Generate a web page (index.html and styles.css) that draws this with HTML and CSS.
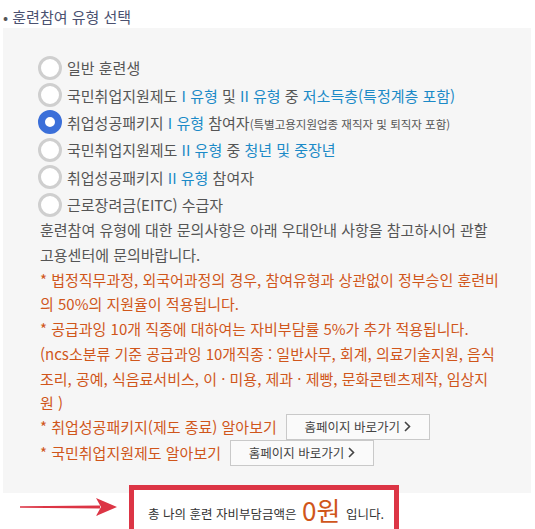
FILE: index.html
```html
<!DOCTYPE html>
<html lang="ko">
<head>
    <meta charset="UTF-8">
    <meta name="viewport" content="width=device-width, initial-scale=1.0">
    <title>훈련참여 유형 선택</title>
    <link rel="stylesheet" href="styles.css">
</head>
<body>
    <div class="title"><span class="dot">•</span> 훈련참여 유형 선택</div>

    <div class="type-box">
        <ul class="types">
            <li><span class="radio"></span><span>일반 훈련생</span></li>
            <li><span class="radio"></span><span>국민취업지원제도 <span class="blue">I 유형</span> 및 <span class="blue">II 유형</span> 중 <span class="blue">저소득층(특정계층 포함)</span></span></li>
            <li><span class="radio checked"></span><span>취업성공패키지 <span class="blue">I 유형</span> 참여자<small>(특별고용지원업종 재직자 및 퇴직자 포함)</small></span></li>
            <li><span class="radio"></span><span>국민취업지원제도 <span class="blue">II 유형</span> 중 <span class="blue">청년 및 중장년</span></span></li>
            <li><span class="radio"></span><span>취업성공패키지 <span class="blue">II 유형</span> 참여자</span></li>
            <li><span class="radio"></span><span>근로장려금(EITC) 수급자</span></li>
        </ul>

        <div class="info">
            <p>훈련참여 유형에 대한 문의사항은 아래 우대안내 사항을 참고하시어 관할 고용센터에 문의바랍니다.</p>
            <p class="orange">* 법정직무과정, 외국어과정의 경우, 참여유형과 상관없이 정부승인 훈련비의 50%의 지원율이 적용됩니다.</p>
            <p class="orange">* 공급과잉 10개 직종에 대하여는 자비부담률 5%가 추가 적용됩니다.<br>(ncs소분류 기준 공급과잉 10개직종 : 일반사무, 회계, 의료기술지원, 음식조리, 공예, 식음료서비스, 이 · 미용, 제과 · 제빵, 문화콘텐츠제작, 임상지원 )</p>
            <div class="links">
                <div class="link-row">
                    <span class="orange">* 취업성공패키지(제도 종료) 알아보기</span>
                    <a href="#" class="btn">홈페이지 바로가기 <svg width="7" height="11" viewBox="0 0 7 11"><polyline points="1,1 5.5,5.5 1,10" fill="none" stroke="#444" stroke-width="1.6"/></svg></a>
                </div>
                <div class="link-row">
                    <span class="orange">* 국민취업지원제도 알아보기</span>
                    <a href="#" class="btn">홈페이지 바로가기 <svg width="7" height="11" viewBox="0 0 7 11"><polyline points="1,1 5.5,5.5 1,10" fill="none" stroke="#444" stroke-width="1.6"/></svg></a>
                </div>
            </div>
        </div>
    </div>

    <div class="result">
        <svg class="arrow" width="97" height="20" viewBox="0 0 97 20">
            <path d="M0 9.2 L80 8.6 L80 11.4 L0 10.8 Z" fill="#dc3545"/>
            <path d="M76 1 L97 10 L76 19 L81 10 Z" fill="#dc3545"/>
        </svg>
        <div class="total">총 나의 훈련 자비부담금액은 <strong class="won">0원</strong> 입니다.</div>
    </div>
</body>
</html>
```

FILE: styles.css
```css
body {
    margin: 0;
    font-family: "Noto Sans CJK KR", "Noto Sans", sans-serif;
    font-size: 15px;
    color: #555;
    background: #fff;
}
.title {
    height: 28px;
    box-sizing: border-box;
    padding: 5px 0 0 3px;
    line-height: 23px;
    color: #4b5170;
}
.title .dot {
    color: #555;
}
.type-box {
    margin: 0 4px 0 3px;
    padding: 26px 32px 25px 35px;
    background: #f6f6f6;
}
.types {
    list-style: none;
    margin: 0;
    padding: 0;
}
.types li {
    display: flex;
    align-items: center;
    height: 27.4px;
    white-space: nowrap;
}
.types li small {
    font-size: 11.5px;
}
.radio {
    width: 24px;
    height: 24px;
    box-sizing: border-box;
    border: 3px solid #cfcfcf;
    border-radius: 50%;
    background: #fff;
    margin-right: 5px;
    flex-shrink: 0;
}
.radio.checked {
    border: 7px solid #3b6fd9;
}
.blue {
    color: #1b8ac7;
}
.info {
    margin-left: 2px;
    line-height: 24.7px;
}
.info p {
    margin: 0;
}
.orange {
    color: #d0561b;
}
.links {
    margin-top: -2px;
    padding-bottom: 2px;
}
.link-row {
    height: 26px;
    display: flex;
    align-items: center;
}
.btn {
    display: inline-flex;
    align-items: center;
    justify-content: center;
    gap: 4px;
    width: 144px;
    height: 26px;
    box-sizing: border-box;
    margin-left: 9px;
    border: 1px solid #c9c9c9;
    background: #fafafa;
    color: #444;
    font-size: 12.5px;
    text-decoration: none;
}
.result {
    display: flex;
    align-items: flex-start;
    gap: 12px;
    margin-top: -8px;
    padding-left: 20px;
}
.arrow {
    margin-top: 12px;
}
.total {
    border: 5px solid #dc3545;
    background: #fff;
    padding: 4px 10px 12px 14px;
    font-size: 12.5px;
    color: #333;
    line-height: 32px;
}
.won {
    font-size: 26px;
    font-weight: normal;
    color: #d0561b;
    margin: 0 2px;
    vertical-align: -2px;
}
```
